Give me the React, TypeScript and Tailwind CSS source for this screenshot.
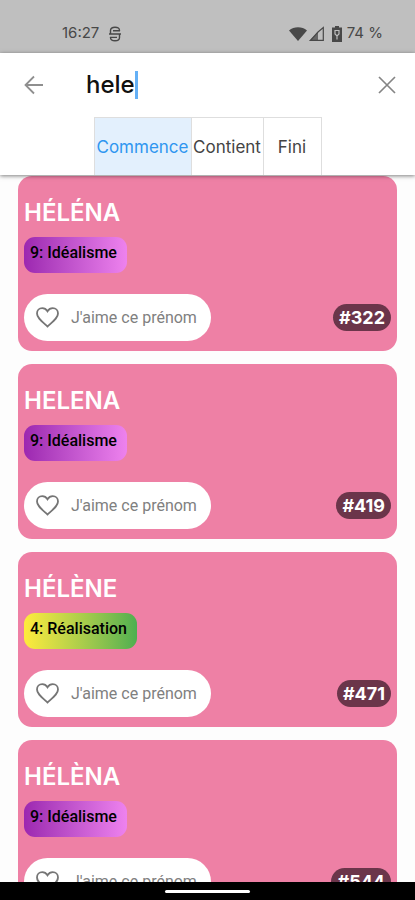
import { useState } from "react";

type Trait = "idealisme" | "realisation";

const traits: Record<Trait, { label: string; style: string }> = {
  idealisme: { label: "9: Idéalisme", style: "from-[#9c27b0] to-[#ee82ee]" },
  realisation: { label: "4: Réalisation", style: "from-[#ffeb3b] to-[#4caf50]" },
};

const names: { name: string; trait: Trait; rank: number }[] = [
  { name: "HÉLÉNA", trait: "idealisme", rank: 322 },
  { name: "HELENA", trait: "idealisme", rank: 419 },
  { name: "HÉLÈNE", trait: "realisation", rank: 471 },
  { name: "HÉLÈNA", trait: "idealisme", rank: 544 },
];

const modes = [
  { label: "Commence", width: "w-[97px]" },
  { label: "Contient", width: "w-[72px]" },
  { label: "Fini", width: "w-[57px]" },
];

function StatusBar() {
  return (
    <div className="flex h-[53px] shrink-0 items-center justify-between bg-[#bfbfbf] pt-3.5 pr-8 pl-[62px] text-[15px] text-[#484848]">
      <div className="flex items-center gap-2">
        <span>16:27</span>
        <svg className="h-4 w-4" viewBox="0 0 16 16" fill="none" stroke="#484848" strokeWidth="1.4">
          <path d="M12.5 5V4.500C12.500 2.300 11 1.200 8 1.200S3.500 2.300 3.500 4.500V8h9v3.500c0 2.200-1.500 3.300-4.500 3.300s-4.500-1.100-4.500-3.300V11M2 8h12M6 4.800h7M3 11.400h7" />
        </svg>
      </div>
      <div className="flex items-center">
        <svg className="mr-0.5 h-4 w-[18px]" viewBox="0 0 18 16" fill="#484848">
          <path d="M0 4.500C5 .3 13 .3 18 4.500L9 15z" />
        </svg>
        <svg className="mr-1.5 h-4 w-4" viewBox="0 0 16 16">
          <path d="M0 15 9 6v9z" fill="#484848" opacity=".75" />
          <path d="M9 6 14.300 1.500v12.800H1.500z" fill="none" stroke="#484848" strokeWidth="1.2" />
        </svg>
        <svg className="mr-1 h-4 w-3" viewBox="0 0 12 16">
          <path d="M4 0h4v1.500h3V16H1V1.500h3z" fill="#484848" />
          <path d="M4 4.500h4v3.500L6 10 4 8zM6 10v3.500" fill="none" stroke="#bfbfbf" strokeWidth="1.2" />
        </svg>
        <span>74 %</span>
      </div>
    </div>
  );
}

function NameCard({ name, trait, rank }: { name: string; trait: Trait; rank: number }) {
  return (
    <article className="rounded-[14px] bg-[#ee80a5] px-1.5 pt-[21px] pb-2.5">
      <h2 className="text-2xl font-semibold text-white">{name}</h2>
      <div
        className={`mt-2 h-9 w-fit rounded-[11px] bg-linear-to-r pt-1 pr-2.5 pl-1.5 font-[Roboto,sans-serif] text-base font-medium text-black ${traits[trait].style}`}
      >
        {traits[trait].label}
      </div>
      <div className="mt-[21px] flex items-center justify-between">
        <button className="flex h-[47px] items-center gap-3 rounded-full bg-white pr-3.5 pl-3 font-[Roboto,sans-serif] text-base text-[#808080]">
          <svg className="h-[21px] w-[23px]" viewBox="0 0 23 21" fill="none" stroke="#757575" strokeWidth="1.8" aria-hidden="true">
            <path d="M11.500 19.500C5 13.700 1 10.700 1 6.500 1 3.400 3.300 1.200 6.200 1.200c2.200 0 4.100 1.100 5.300 3 1.200-1.900 3.100-3 5.300-3 2.900 0 5.200 2.200 5.200 5.300 0 4.200-4 7.200-10.500 13z" />
          </svg>
          J'aime ce prénom
        </button>
        <span className="rounded-full bg-[#6b354a] px-1.5 text-lg leading-[27px] font-bold text-white">#{rank}</span>
      </div>
    </article>
  );
}

export default function App() {
  const [query, setQuery] = useState("hele");
  const [mode, setMode] = useState("Commence");

  return (
    <div className="flex h-screen flex-col overflow-hidden bg-[#fdfdfd] font-[Inter,sans-serif]">
      <StatusBar />
      <header className="relative z-10 shrink-0 bg-white shadow-[0_1px_4px_rgba(0,0,0,0.5)]">
        <div className="flex h-16 items-center pr-[18px] pl-6">
          <button aria-label="Retour" className="mr-[42px] text-[#8f8f8f]">
            <svg className="h-5 w-5" viewBox="0 0 20 20" fill="none" stroke="currentColor" strokeWidth="1.8">
              <path d="M19 10H2M10 1.500 1.500 10l8.500 8.500" />
            </svg>
          </button>
          <div className="flex flex-1 items-center">
            <input
              aria-label="Rechercher un prénom"
              value={query}
              onChange={(e) => setQuery(e.target.value)}
              className="field-sizing-content text-2xl font-medium text-[#111] caret-transparent outline-none"
            />
            <span className="h-7 w-[3px] bg-[#64b0f6]" />
          </div>
          <button aria-label="Effacer" className="text-[#858585]">
            <svg className="h-5 w-5" viewBox="0 0 20 20" fill="none" stroke="currentColor" strokeWidth="1.7">
              <path d="m2 2 16 16m0-16L2 18" />
            </svg>
          </button>
        </div>
        <div className="flex justify-center">
          <div className="flex divide-x divide-[#dedede] border border-b-0 border-[#dedede]">
            {modes.map(({ label, width }) => (
              <button
                key={label}
                aria-pressed={mode === label}
                onClick={() => setMode(label)}
                className={`flex h-[57px] items-center justify-center pt-0.5 text-[17px] ${width} ${
                  mode === label ? "bg-[#e3f0fd] text-[#2f96f0]" : "text-[#444]"
                }`}
              >
                {label}
              </button>
            ))}
          </div>
        </div>
      </header>
      <main className="flex min-h-0 flex-1 flex-col gap-[13px] overflow-hidden px-[18px] pt-px">
        {names.map((item) => (
          <NameCard key={item.name} {...item} />
        ))}
      </main>
      <div className="relative z-10 flex h-[18px] shrink-0 items-center justify-center bg-black">
        <div className="h-[3px] w-[85px] rounded-full bg-white" />
      </div>
    </div>
  );
}
